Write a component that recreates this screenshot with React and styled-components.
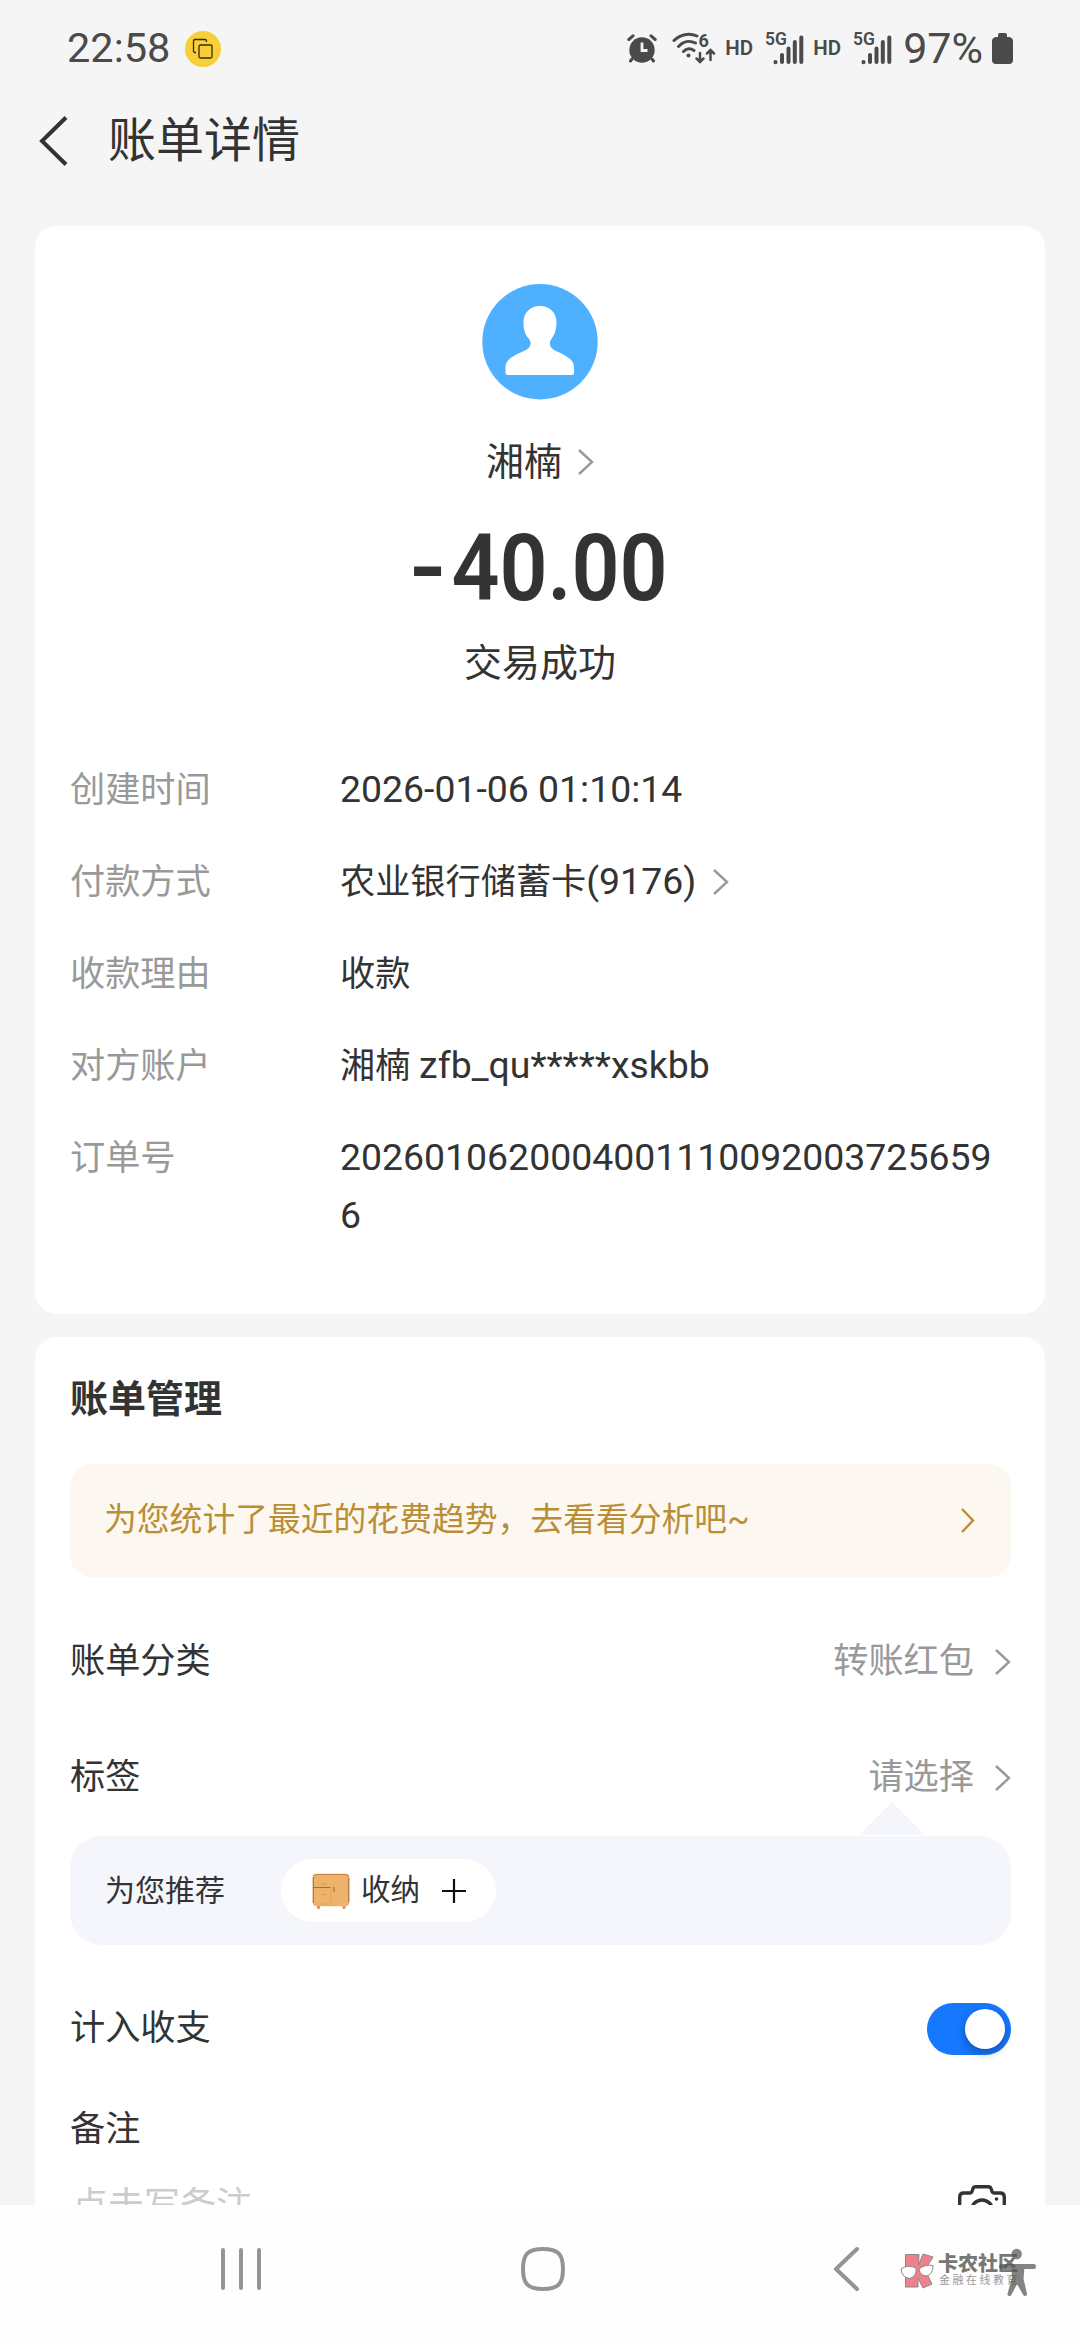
import { useState } from 'react';
import styled, { createGlobalStyle } from 'styled-components';

const GlobalStyle = createGlobalStyle`
  * {
    box-sizing: border-box;
  }

  body {
    margin: 0;
    background: #f5f5f5;
    font-family: Roboto, 'Noto Sans CJK SC', sans-serif;
    line-height: 1.4;
    color: #333;
  }

  svg {
    display: block;
    flex: none;
  }
`;

const Screen = styled.div`
  display: flex;
  flex-direction: column;
  width: 1080px;
  height: 2340px;
  overflow: hidden;
`;

const StatusBar = styled.div`
  display: flex;
  align-items: center;
  height: 96px;
  padding: 0 67px;
  color: #4a4a4a;
  flex: none;
`;

const Clock = styled.div`
  font-size: 41.5px;
  line-height: 48px;
  margin-right: 15px;
`;

const CopyBadge = styled.div`
  display: flex;
  align-items: center;
  justify-content: center;
  width: 36px;
  height: 36px;
  margin-top: 2px;
  border-radius: 50%;
  background: #f7cf38;
`;

const StatusIcons = styled.div`
  display: flex;
  align-items: center;
  margin-left: auto;
`;

const HdLabel = styled.div`
  width: 28px;
  margin: 0 12px 0 9px;
  font-size: 20.5px;
  font-weight: 600;
  line-height: 24px;
`;

const Percent = styled.div`
  margin: 0 9px 0 11px;
  font-size: 43px;
  line-height: 48px;
`;

const Header = styled.div`
  display: flex;
  align-items: center;
  height: 130px;
  padding: 0 38px 40px;
  flex: none;
`;

const Title = styled.div`
  margin-left: 40px;
  font-size: 48px;
  line-height: 60px;
`;

const Content = styled.div`
  flex: 1;
  min-height: 0;
  overflow: hidden;
  padding: 0 35px;
`;

const Card = styled.div`
  background: #fff;
  border-radius: 22px;
  margin-bottom: 23px;
`;

const Summary = styled.div`
  display: flex;
  flex-direction: column;
  align-items: center;
  padding-top: 58px;
`;

const Payee = styled.div`
  display: flex;
  align-items: center;
  gap: 16px;
  margin-top: 38px;
  font-size: 38px;
  line-height: 48px;
`;

const Amount = styled.div`
  margin-top: 30px;
  font-size: 93px;
  font-weight: 600;
  line-height: 106px;
  transform: scaleX(0.905);
`;

const Sign = styled.span`
  display: inline-block;
  margin-right: 9px;
  transform: scaleX(1.2);
`;

const Status = styled.div`
  margin-top: 17px;
  font-size: 38px;
  line-height: 48px;
`;

const Details = styled.div`
  padding: 74px 35px 69px;
`;

const DetailRow = styled.div`
  display: flex;
  margin-bottom: 34px;
  font-size: 35.2px;
  line-height: 58px;

  &:last-child {
    margin-bottom: 0;
  }
`;

const DetailLabel = styled.div`
  width: 270px;
  flex: none;
  color: #999;
`;

const DetailValue = styled.div`
  display: flex;
  align-items: center;
  flex: 1;
  min-width: 0;
`;

const ValueText = styled.div`
  min-width: 0;
  word-break: break-all;
  margin-right: 17px;
`;

const Latin = styled.span`
  font-size: 37.4px;
  line-height: 1;
`;

const ManageCard = styled(Card)`
  padding: 32px 34px 0 35px;
  margin-bottom: 0;
  border-radius: 22px 22px 0 0;
  height: 900px;
`;

const SectionTitle = styled.div`
  font-size: 38px;
  font-weight: 700;
  line-height: 60px;
`;

const TrendBanner = styled.div`
  display: flex;
  align-items: center;
  justify-content: space-between;
  height: 113px;
  margin-top: 35px;
  padding: 0 36px 0 34px;
  border-radius: 22px;
  background: #fcf8f1;
  color: #b98e35;
  font-size: 32.8px;
`;

const FieldRow = styled.div`
  display: flex;
  align-items: center;
  justify-content: space-between;
  height: 60px;
  margin-top: ${({ $top }) => $top}px;
  font-size: 35.2px;
`;

const FieldValue = styled.div`
  display: flex;
  align-items: center;
  gap: 21px;
  color: #999;
`;

const Recommend = styled.div`
  position: relative;
  display: flex;
  align-items: center;
  height: 109px;
  margin-top: 28px;
  padding-left: 35px;
  border-radius: 32px;
  background: #f5f6fb;
  font-size: 30px;
`;

const Pointer = styled.div`
  position: absolute;
  right: 86px;
  bottom: 110px;
  border-left: 33px solid transparent;
  border-right: 33px solid transparent;
  border-bottom: 33px solid #f5f6fb;
`;

const Chip = styled.div`
  display: flex;
  align-items: center;
  width: 215px;
  height: 63px;
  margin-left: 56px;
  padding-left: 31px;
  border-radius: 32px;
  background: #fff;
  font-size: 29.5px;
`;

const ChipText = styled.span`
  margin: 0 22px 0 11px;
`;

const Toggle = styled.button`
  display: flex;
  align-items: center;
  justify-content: ${({ $on }) => ($on ? 'flex-end' : 'flex-start')};
  width: 84px;
  height: 52px;
  padding: 0 6px;
  border: none;
  border-radius: 26px;
  background: ${({ $on }) => ($on ? '#1677ff' : '#e5e5e5')};
`;

const Knob = styled.span`
  width: 40px;
  height: 40px;
  border-radius: 50%;
  background: #fff;
  box-shadow: 0 4px 10px rgba(0, 0, 0, 0.3);
`;

const NoteRow = styled.div`
  display: flex;
  justify-content: space-between;
  margin-top: 21px;
  padding: 0 4px 0 2px;
  color: #ccc;
  font-size: 36px;
  line-height: 50px;
`;

const CameraButton = styled.div`
  padding-top: 4px;
`;

const NavBar = styled.div`
  position: relative;
  display: flex;
  align-items: center;
  height: 135px;
  padding: 0 0 8px;
  background: #fefefe;
  flex: none;
`;

const NavItem = styled.div`
  margin-left: ${({ $before }) => $before}px;
`;

const Watermark = styled.div`
  position: absolute;
  left: 900px;
  top: 47px;
  display: flex;
  gap: 4px;
`;

const WatermarkName = styled.div`
  padding-top: 2px;
  color: #777;
  font-size: 20px;
  font-weight: 900;
  line-height: 20px;
  white-space: nowrap;
`;

const WatermarkSlogan = styled.div`
  padding-left: 1px;
  color: #999;
  font-size: 11px;
  line-height: 13px;
  letter-spacing: 2.5px;
  white-space: nowrap;
`;

const Accessibility = styled.div`
  position: absolute;
  left: 998px;
  top: 43px;
`;

const Chevron = ({ width = 16, height = 26, color = '#999' }) => (
    <svg width={width} height={height} viewBox={`0 0 ${width} ${height}`} fill="none">
        <path
            d={`M1 1 L${width - 2} ${height / 2} L1 ${height - 1}`}
            stroke={color}
            strokeWidth="2.4"
        />
    </svg>
);

const CopyIcon = () => (
    <svg width="22" height="22" viewBox="0 0 22 22" fill="none" stroke="#3a2b05" strokeWidth="1.3">
        <path d="M4 14.5H3Q1.5 14.5 1.5 13V3Q1.5 1.5 3 1.5H13Q14.5 1.5 14.5 3V4" />
        <rect x="7" y="7" width="13" height="13" rx="1.5" />
    </svg>
);

const AlarmIcon = () => (
    <svg width="30" height="30" viewBox="0 0 30 30" stroke="#4a4a4a" fill="none" strokeLinecap="round">
        <circle cx="15" cy="17" r="12.7" fill="#4a4a4a" stroke="none" />
        <path d="M1.8 6.5L6 2.8M28.2 6.5L24 2.8M5 26L3.5 28M25 26L26.5 28" strokeWidth="3" />
        <path d="M15 9.5V17.5H20.5" stroke="#f5f5f5" strokeWidth="2.8" strokeLinecap="butt" />
    </svg>
);

const WifiGlyph = styled.svg`
  margin-left: 15px;
`;

const WifiIcon = () => (
    <WifiGlyph width="44" height="40" viewBox="0 -4 44 40" fill="none" stroke="#4a4a4a" strokeWidth="3" strokeLinecap="round">
        <path d="M2 8.5C8 2.5 17 .5 25 4M6.5 14.5C11 9.5 17.5 8 23.5 11M11.5 19.5C14.5 16.5 18.5 16 22 18.5" />
        <circle cx="16.5" cy="23.5" r="2" fill="#4a4a4a" stroke="none" />
        <path d="M28 21V29.5M24.5 26.5L28 30L31.5 26.5M38.5 28V18.5M35 21.5L38.5 18L42 21.5" strokeWidth="2.5" />
        <text x="26.5" y="14.5" fill="#4a4a4a" stroke="none" fontFamily="Roboto" fontSize="18" fontWeight="700">6</text>
    </WifiGlyph>
);

const SignalIcon = () => (
    <svg width="39" height="42" viewBox="0 -4 39 42" stroke="#4a4a4a" strokeWidth="4" strokeLinecap="round">
        <path d="M10.5 31V31.2M17 24V31M23.5 17.5V31M29.8 11V31M36.3 6.5V31" />
        <text x="0" y="13.5" fill="#4a4a4a" stroke="none" fontFamily="Roboto" fontSize="17.5" fontWeight="600">5G</text>
    </svg>
);

const BatteryIcon = () => (
    <svg width="21" height="31" viewBox="0 0 21 31" fill="#4a4a4a">
        <path d="M6 2q0-2 2-2h5q2 0 2 2v2h2.5q3.5 1 3.5 4v19q0 4-4 4H4q-4 0-4-4V8q0-3 3.5-4H6z" />
    </svg>
);

const BackIcon = () => (
    <svg width="30" height="50" viewBox="0 0 30 50" fill="none" stroke="#333" strokeWidth="4">
        <path d="M28 1.5L4 25L28 48.5" />
    </svg>
);

const Avatar = () => (
    <svg width="116" height="116" viewBox="0 0 116 116">
        <circle cx="58" cy="57.7" r="57.7" fill="#4eb0ff" />
        <path
            fill="#fff"
            d="M58 22C68 22 74.5 29 74.5 38C74.5 46 72.5 51 69 55.5C67 59 67.5 63 72 66C80 70 92 74 92 83V88.5Q92 91 89.5 91H25.5Q23.5 91 23.5 88.5V83C23.5 74 36 70 44 66C49 63 49.5 59 47.5 55.5C43 51 41.5 46 41.5 38C41.5 29 48 22 58 22Z"
        />
    </svg>
);

const CabinetIcon = () => (
    <svg width="38" height="36" viewBox="0 0 38 36" fill="none">
        <path d="M5 32h3v2.5a1.5 1.5 0 0 1-3 0zM30.5 32h3v2.5a1.5 1.5 0 0 1-3 0z" fill="#d88f45" />
        <rect x=".7" y=".7" width="36.6" height="32.6" rx="4" fill="#edb26b" />
        <path d="M1.5 3Q2.5 1.5 5 1.5H33Q36 1.5 36.5 4" stroke="#c98142" strokeWidth="1.2" />
        <path d="M1.3 4V30M1 14.5H18.5M36.8 5V29" stroke="#a86a38" strokeWidth="1" />
        <path d="M9 11H15M9 21.5H15M9 31H15" stroke="#d9a05c" strokeWidth="1.2" />
        <path d="M19 15V33" stroke="#e3a45d" />
        <path d="M22 14V19" stroke="#b97a3c" strokeWidth="1.4" />
    </svg>
);

const PlusIcon = () => (
    <svg width="24" height="24" viewBox="0 0 24 24" stroke="#111" strokeWidth="2.2">
        <path d="M0 12H24M12 0V24" />
    </svg>
);

const CameraIcon = () => (
    <svg width="50" height="44" viewBox="0 0 50 44" fill="none" stroke="#333" strokeWidth="3.4">
        <path d="M2.7 40V12Q2.7 8 6.7 8H13Q14.5 8 15 6.5L16 3.5Q16.7 1.7 18.5 1.7H31.5Q33.3 1.7 34 3.5L35 6.5Q35.5 8 37 8H43.3Q47.3 8 47.3 12V40Z" />
        <circle cx="25" cy="25.5" r="10.5" />
        <circle cx="39.5" cy="14" r="1.8" fill="#333" stroke="none" />
    </svg>
);

const RecentsIcon = () => (
    <svg width="42" height="44" viewBox="0 0 42 44" stroke="#949494" strokeWidth="4" strokeLinecap="round">
        <path d="M3 3V41M21 3V41M39 3V41" />
    </svg>
);

const HomeIcon = () => (
    <svg width="44" height="44" viewBox="0 0 44 44" fill="none" stroke="#949494" strokeWidth="4">
        <path d="M22 2C37 2 42 7 42 22S37 42 22 42S2 37 2 22S7 2 22 2Z" />
    </svg>
);

const NavBackIcon = () => (
    <svg width="28" height="46" viewBox="0 0 28 46" fill="none" stroke="#949494" strokeWidth="4" strokeLinecap="round">
        <path d="M25 3L4 23L25 43" strokeLinejoin="round" />
    </svg>
);

const WatermarkLogo = () => (
    <svg width="34" height="38" viewBox="0 0 34 38" stroke="#888" strokeWidth="1">
        <path d="M5.5 2.5H19L18.5 13L23 2L33 5L25 18L32 32L23 36L18 26V35H5.5Z" fill="#f0808b" />
        <path d="M1 17Q8 12 16 16Q17 24 10 26.5Q2 26 1 17ZM19 17Q25 12 33 13.5Q33 22 27 24Q20 24 19 17Z" fill="#fff" />
    </svg>
);

const AccessibilityIcon = () => (
    <svg width="40" height="52" viewBox="0 0 40 52" fill="#555" stroke="#555" opacity=".72" strokeLinecap="round" strokeLinejoin="round">
        <circle cx="18.7" cy="6" r="5.2" stroke="none" />
        <path d="M3.5 18.5H35.5" strokeWidth="5" />
        <path d="M15.5 19H24.5L23.5 31L27 46L19 32L11.5 46L16 30Z" strokeWidth="4" />
    </svg>
);

const details = [
    { label: '创建时间', value: <Latin>2026-01-06 01:10:14</Latin> },
    { label: '付款方式', value: <>农业银行储蓄卡<Latin>(9176)</Latin></>, link: true },
    { label: '收款理由', value: '收款' },
    { label: '对方账户', value: <>湘楠 <Latin>zfb_qu*****xskbb</Latin></> },
    { label: '订单号', value: <Latin>20260106200040011100920037256596</Latin> },
];

const App = () => {
    const [counted, setCounted] = useState(true);

    return (
        <Screen>
            <GlobalStyle />
            <StatusBar>
                <Clock>22:58</Clock>
                <CopyBadge><CopyIcon /></CopyBadge>
                <StatusIcons>
                    <AlarmIcon />
                    <WifiIcon />
                    <HdLabel>HD</HdLabel>
                    <SignalIcon />
                    <HdLabel>HD</HdLabel>
                    <SignalIcon />
                    <Percent>97%</Percent>
                    <BatteryIcon />
                </StatusIcons>
            </StatusBar>
            <Header>
                <BackIcon />
                <Title>账单详情</Title>
            </Header>
            <Content>
                <Card>
                    <Summary>
                        <Avatar />
                        <Payee>湘楠<Chevron /></Payee>
                        <Amount><Sign>-</Sign>40.00</Amount>
                        <Status>交易成功</Status>
                    </Summary>
                    <Details>
                        {details.map(({ label, value, link }) => (
                            <DetailRow key={label}>
                                <DetailLabel>{label}</DetailLabel>
                                <DetailValue>
                                    <ValueText>{value}</ValueText>
                                    {link && <Chevron />}
                                </DetailValue>
                            </DetailRow>
                        ))}
                    </Details>
                </Card>
                <ManageCard>
                    <SectionTitle>账单管理</SectionTitle>
                    <TrendBanner>
                        为您统计了最近的花费趋势，去看看分析吧~
                        <Chevron width={14} height={25} color="#b98e35" />
                    </TrendBanner>
                    <FieldRow $top={55}>
                        账单分类
                        <FieldValue>转账红包<Chevron /></FieldValue>
                    </FieldRow>
                    <FieldRow $top={56}>
                        标签
                        <FieldValue>请选择<Chevron /></FieldValue>
                    </FieldRow>
                    <Recommend>
                        <Pointer />
                        为您推荐
                        <Chip>
                            <CabinetIcon />
                            <ChipText>收纳</ChipText>
                            <PlusIcon />
                        </Chip>
                    </Recommend>
                    <FieldRow $top={54}>
                        计入收支
                        <Toggle $on={counted} onClick={() => setCounted(!counted)}>
                            <Knob />
                        </Toggle>
                    </FieldRow>
                    <FieldRow $top={41}>备注</FieldRow>
                    <NoteRow>
                        点击写备注
                        <CameraButton><CameraIcon /></CameraButton>
                    </NoteRow>
                </ManageCard>
            </Content>
            <NavBar>
                <NavItem $before={220}><RecentsIcon /></NavItem>
                <NavItem $before={259}><HomeIcon /></NavItem>
                <NavItem $before={267}><NavBackIcon /></NavItem>
                <Watermark>
                    <WatermarkLogo />
                    <div>
                        <WatermarkName>卡农社区</WatermarkName>
                        <WatermarkSlogan>金融在线教育</WatermarkSlogan>
                    </div>
                </Watermark>
                <Accessibility><AccessibilityIcon /></Accessibility>
            </NavBar>
        </Screen>
    );
};

export default App;
